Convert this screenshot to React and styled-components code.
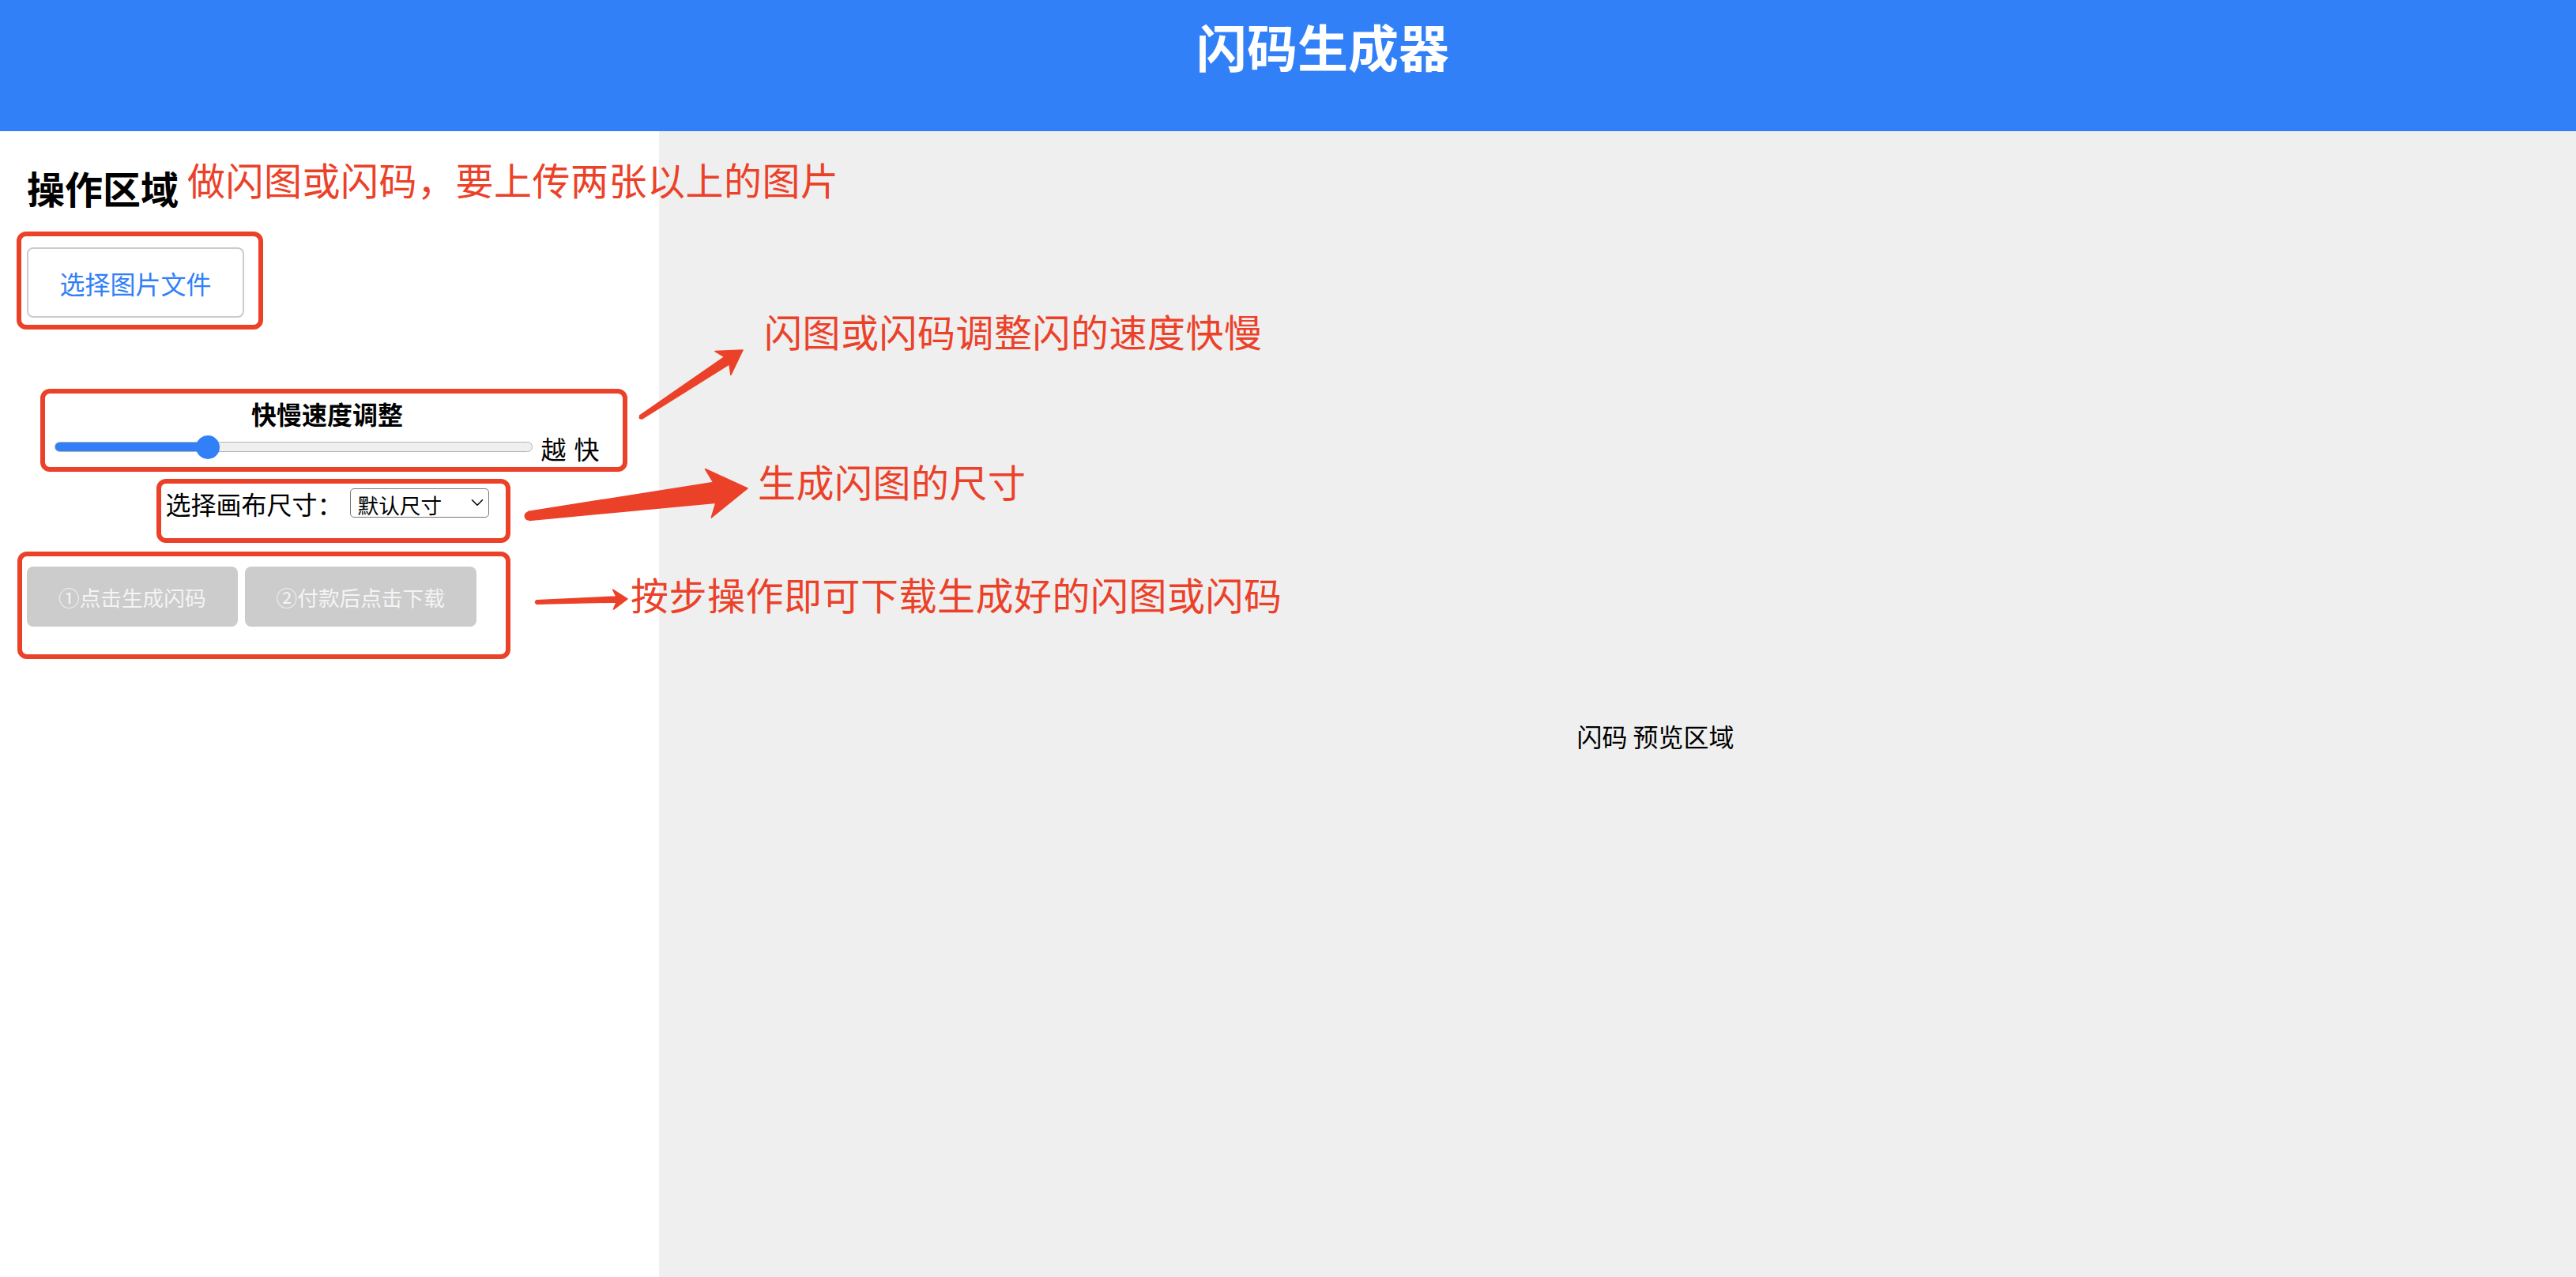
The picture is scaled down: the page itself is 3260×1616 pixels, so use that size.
import React from 'react';
import styled, { createGlobalStyle } from 'styled-components';
import { ChevronDown } from 'lucide-react';

const GlobalStyle = createGlobalStyle`
  html, body {
    margin: 0;
    padding: 0;
    background: #ffffff;
  }
  body {
    font-family: "Noto Sans CJK SC", "Noto Sans", sans-serif;
    color: #000;
  }
`;

const FONT = '"Noto Sans CJK SC", "Noto Sans", sans-serif';
const BLUE = '#3180f8';
const MARK = '#ec4129';

const Page = styled.div`
  position: relative;
  width: 3260px;
  height: 1616px;
  overflow: hidden;
  display: flex;
  flex-direction: column;
`;

const Header = styled.header`
  flex: none;
  height: 166px;
  box-sizing: border-box;
  padding: 25px 0 0 88px;
  background: ${BLUE};
  text-align: center;
`;

const Title = styled.h1`
  margin: 0;
  font-size: 64px;
  line-height: 64px;
  font-weight: 700;
  color: #fff;
`;

const Main = styled.main`
  flex: 1;
  display: flex;
`;

const LeftPanel = styled.section`
  flex: none;
  width: 834px;
  box-sizing: border-box;
  padding: 47px 40px 0 34px;
  background: #fff;
`;

const Heading = styled.h2`
  margin: 0;
  font-size: 48px;
  line-height: 48px;
  font-weight: 700;
`;

const FileButton = styled.button`
  display: block;
  margin-top: 52px;
  width: 275px;
  height: 89px;
  border: 2px solid #cbcbcb;
  border-radius: 8px;
  background: #fff;
  color: ${BLUE};
  font-family: ${FONT};
  font-size: 32px;
  padding: 0;
`;

const SpeedSection = styled.div`
  margin-top: 105px;
  text-align: center;
`;

const SpeedTitle = styled.div`
  font-size: 32px;
  line-height: 32px;
  font-weight: 700;
`;

const SliderRow = styled.div`
  display: flex;
  justify-content: center;
  align-items: flex-start;
  gap: 10px;
  margin-top: 11px;
`;

const SpeedRange = styled.input.attrs({ type: 'range' })`
  -webkit-appearance: none;
  appearance: none;
  width: 605px;
  height: 30px;
  margin: 0;
  background: transparent;

  &::-webkit-slider-runnable-track {
    height: 13px;
    border: 1.5px solid #b4b4b4;
    border-radius: 8px;
    background: linear-gradient(to right, ${BLUE} 0 var(--fill), #efefef var(--fill) 100%);
  }

  &::-webkit-slider-thumb {
    -webkit-appearance: none;
    width: 30px;
    height: 30px;
    border: none;
    border-radius: 50%;
    background: ${BLUE};
    margin-top: -8.5px;
  }
`;

const RangeLabel = styled.span`
  font-size: 32px;
  line-height: 34px;
  white-space: pre;
  word-spacing: 3px;
`;

const SizeRow = styled.div`
  display: flex;
  justify-content: center;
  align-items: center;
  gap: 9px;
  margin-top: 34px;
`;

const SizeLabel = styled.label`
  font-size: 32px;
  line-height: 32px;
`;

const SelectWrap = styled.div`
  position: relative;
  display: inline-block;
`;

const SizeSelect = styled.select`
  -webkit-appearance: none;
  appearance: none;
  display: block;
  width: 176px;
  height: 37px;
  box-sizing: border-box;
  padding: 0 0 0 9px;
  border: 1.5px solid #767676;
  border-radius: 5px;
  background: #fff;
  color: #000;
  font-family: ${FONT};
  font-size: 26.67px;
`;

const Chevron = styled(ChevronDown)`
  position: absolute;
  right: 2px;
  top: 5px;
  pointer-events: none;
`;

const ActionRow = styled.div`
  display: flex;
  gap: 9px;
  margin-top: 62px;
`;

const ActionButton = styled.button`
  height: 76px;
  padding: 0 40px;
  border: none;
  border-radius: 8px;
  background: #cccccc;
  color: #f4f4f4;
  font-family: ${FONT};
  font-size: 26.67px;
`;

const RightPanel = styled.section`
  flex: 1;
  display: flex;
  align-items: center;
  justify-content: center;
  padding: 80px 0 0 96px;
  background: #efefef;
`;

const PreviewText = styled.div`
  font-size: 32px;
  line-height: 32px;
`;

/* markup layer drawn over the screenshot */
const Markup = styled.div`
  position: absolute;
  inset: 0;
  pointer-events: none;
`;

const MarkBox = styled.div`
  position: absolute;
  box-sizing: border-box;
  border: 6px solid ${MARK};
  border-radius: 12px;
`;

const Note = styled.div`
  position: absolute;
  font-size: 48px;
  line-height: 48px;
  letter-spacing: 0.5px;
  color: ${MARK};
  white-space: nowrap;
`;

const ArrowLayer = styled.svg`
  position: absolute;
  left: 0;
  top: 0;
`;

function arrowPoints([tx, ty], [px, py], { headLen, headHalf, tailW, neckW, notch }) {
  const dx = px - tx;
  const dy = py - ty;
  const len = Math.hypot(dx, dy);
  const ux = dx / len;
  const uy = dy / len;
  const nx = -uy;
  const ny = ux;
  const bx = px - ux * headLen;
  const by = py - uy * headLen;
  const kx = px - ux * (headLen - notch);
  const ky = py - uy * (headLen - notch);
  const pts = [
    [tx + nx * tailW / 2, ty + ny * tailW / 2],
    [kx + nx * neckW / 2, ky + ny * neckW / 2],
    [bx + nx * headHalf, by + ny * headHalf],
    [px, py],
    [bx - nx * headHalf, by - ny * headHalf],
    [kx - nx * neckW / 2, ky - ny * neckW / 2],
    [tx - nx * tailW / 2, ty - ny * tailW / 2],
  ];
  return pts.map(p => p.map(v => v.toFixed(1)).join(',')).join(' ');
}

const arrows = [
  { tail: [811, 528], tip: [940, 443], headLen: 30, headHalf: 18, tailW: 5, neckW: 11, notch: 6 },
  { tail: [669, 653], tip: [946, 618], headLen: 50, headHalf: 31, tailW: 11, neckW: 26, notch: 8 },
  { tail: [679, 762], tip: [794, 758], headLen: 18, headHalf: 12.5, tailW: 4.5, neckW: 7, notch: 4 },
];

const boxes = [
  { x: 21, y: 293, w: 312, h: 124 },
  { x: 51, y: 492, w: 743, h: 105 },
  { x: 198, y: 606, w: 448, h: 81 },
  { x: 22, y: 698, w: 624, h: 136 },
];

const notes = [
  { x: 237, y: 202, text: '做闪图或闪码，要上传两张以上的图片' },
  { x: 967, y: 394, text: '闪图或闪码调整闪的速度快慢' },
  { x: 959, y: 584, text: '生成闪图的尺寸' },
  { x: 798, y: 727, text: '按步操作即可下载生成好的闪图或闪码' },
];

const App = () => {
  const speed = 31;

  return (
    <>
      <GlobalStyle />
      <Page>
        <Header>
          <Title>闪码生成器</Title>
        </Header>

        <Main>
          <LeftPanel>
            <Heading>操作区域</Heading>
            <FileButton>选择图片文件</FileButton>

            <SpeedSection>
              <SpeedTitle>快慢速度调整</SpeedTitle>
              <SliderRow>
                <SpeedRange
                  min={0}
                  max={100}
                  defaultValue={speed}
                  style={{ '--fill': '32%' }}
                />
                <RangeLabel>越 快</RangeLabel>
              </SliderRow>
            </SpeedSection>

            <SizeRow>
              <SizeLabel>选择画布尺寸：</SizeLabel>
              <SelectWrap>
                <SizeSelect defaultValue="default">
                  <option value="default">默认尺寸</option>
                </SizeSelect>
                <Chevron size={26} strokeWidth={1.4} color="#000" />
              </SelectWrap>
            </SizeRow>

            <ActionRow>
              <ActionButton disabled>①点击生成闪码</ActionButton>
              <ActionButton disabled>②付款后点击下载</ActionButton>
            </ActionRow>
          </LeftPanel>

          <RightPanel>
            <PreviewText>闪码 预览区域</PreviewText>
          </RightPanel>
        </Main>

        <Markup>
          {boxes.map((b, i) => (
            <MarkBox key={i} style={{ left: b.x, top: b.y, width: b.w, height: b.h }} />
          ))}
          {notes.map((n, i) => (
            <Note key={i} style={{ left: n.x, top: n.y }}>{n.text}</Note>
          ))}
          <ArrowLayer width="3260" height="1616" viewBox="0 0 3260 1616">
            {arrows.map((a, i) => (
              <g key={i} fill={MARK} stroke={MARK} strokeWidth="1.5" strokeLinejoin="round">
                <polygon points={arrowPoints(a.tail, a.tip, a)} />
                <circle cx={a.tail[0]} cy={a.tail[1]} r={a.tailW / 2} stroke="none" />
              </g>
            ))}
          </ArrowLayer>
        </Markup>
      </Page>
    </>
  );
};

export default App;
